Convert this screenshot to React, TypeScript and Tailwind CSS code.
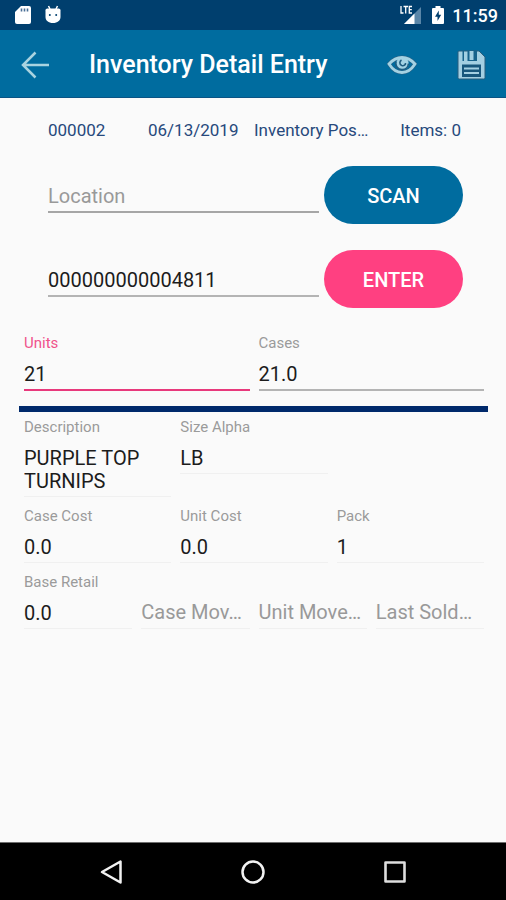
import { useId } from "react";
import clsx from "clsx";

interface FieldProps {
  label: string;
  value: string;
  active?: boolean;
  readOnly?: boolean;
}

function underline(active?: boolean, readOnly?: boolean) {
  if (active) return "border-b-2 border-[#e8397c]";
  if (readOnly) return "border-b border-[#f0f0f0]";
  return "border-b-2 border-[#b4b4b4]";
}

function Field({ label, value, active, readOnly }: FieldProps) {
  const id = useId();

  return (
    <div className="min-w-0">
      <label
        htmlFor={id}
        className={clsx("block text-[15px] leading-5", active ? "text-[#f0528c]" : "text-[#9b9b9b]")}
      >
        {label}
      </label>
      <input
        id={id}
        defaultValue={value}
        readOnly={readOnly}
        className={clsx(
          "block w-full bg-transparent pt-2.5 pb-[3px] text-xl leading-[23px] text-[#1c1c1c] outline-none",
          underline(active, readOnly)
        )}
      />
    </div>
  );
}

function TextAreaField({ label, value }: FieldProps) {
  const id = useId();

  return (
    <div className="min-w-0">
      <label htmlFor={id} className="block text-[15px] leading-5 text-[#9b9b9b]">
        {label}
      </label>
      <textarea
        id={id}
        rows={2}
        defaultValue={value}
        readOnly
        className="block w-full resize-none overflow-hidden border-b border-[#f0f0f0] bg-transparent pt-2.5 pb-[3px] text-xl leading-[23px] text-[#1c1c1c] outline-none"
      />
    </div>
  );
}

function EmptyField({ hint }: { hint: string }) {
  return (
    <input
      aria-label={hint}
      placeholder={hint}
      readOnly
      className="block w-full min-w-0 self-end border-b border-[#f0f0f0] bg-transparent pb-1 text-xl leading-[23px] outline-none placeholder:text-[#999999]"
    />
  );
}

function StatusBar() {
  return (
    <div className="flex h-[30px] items-center bg-[#003f6e] pr-2 pl-[15px]">
      <div className="flex flex-1 items-center gap-3.5">
        {/* SD card */}
        <svg width="16" height="20" viewBox="0 0 16 20">
          <path d="M6 1h8a2 2 0 0 1 2 2v14a2 2 0 0 1-2 2H2a2 2 0 0 1-2-2V7z" fill="#fff" />
          <path d="M6.500 3.500v3M9.500 3.500v3M12.500 3.500v3" stroke="#496f96" strokeWidth="1.600" />
        </svg>
        {/* Android debug bridge */}
        <svg width="16" height="20" viewBox="0 0 16 20">
          <path d="M3.500 1l1.500 3M12.500 1L11 4" stroke="#fff" strokeWidth="1.500" />
          <path d="M2.500 3.500h11A2 2 0 0 1 15.500 6v6c0 3.500-3 6-7.500 6S.500 15.500.500 12V6a2 2 0 0 1 2-2.500z" fill="#fff" />
          <circle cx="4.800" cy="10" r="1" fill="#003f6e" />
          <circle cx="11.200" cy="10" r="1" fill="#003f6e" />
        </svg>
      </div>
      <svg width="22" height="20" viewBox="0 0 22 20">
        <path d="M21 2v17H4z" fill="#5a86a8" />
        <path d="M14.500 8.500V19H4z" fill="#fff" />
        <path d="M1 1v7h2.500M3.500 1.500H8M5.700 1.500V8.500M12 1.500H9.300v6.500H12M9.300 4.700h2.500" fill="none" stroke="#fff" strokeWidth="1.300" />
      </svg>
      <svg className="ml-2.5" width="12" height="20" viewBox="0 0 12 20">
        <path d="M3.500 1h5v2H11a1 1 0 0 1 1 1v14a1 1 0 0 1-1 1H1a1 1 0 0 1-1-1V4a1 1 0 0 1 1-1h2.500z" fill="#fff" />
        <path d="M6.800 5.500L3 11.800h2.500V16L9.200 9.800H6.800z" fill="#003f6e" />
      </svg>
      <span className="ml-2 pt-0.5 text-lg leading-6 font-medium text-white">11:59</span>
    </div>
  );
}

function AppBar() {
  return (
    <header className="flex h-[68px] items-center border-b border-[#0a5485] bg-[#006c9f] pt-[3px] pr-5 pl-[21px]">
      <button aria-label="Back" className="mr-10">
        <svg width="28" height="28" viewBox="0 0 28 28" fill="none" stroke="#a9d3e0" strokeWidth="2.500">
          <path d="M14.500 1.500L2 14l12.500 12.500M2 14h26" />
        </svg>
      </button>
      <h1 className="flex-1 text-[25px] leading-8 font-medium whitespace-nowrap text-white">Inventory Detail Entry</h1>
      <button aria-label="View" className="mr-10">
        <svg width="30" height="20" viewBox="0 0 30 20" fill="none">
          <path
            d="M2 9C6 4.500 10 2.500 15 2.500S24 4.500 28 9c-3.500 5.500-8 8.500-13 8.500S5.500 14.500 2 9z"
            stroke="#2b5f80"
            strokeWidth="3.800"
          />
          <path
            d="M2 9C6 4.500 10 2.500 15 2.500S24 4.500 28 9c-3.500 5.500-8 8.500-13 8.500S5.500 14.500 2 9z"
            stroke="#a3d2e3"
            strokeWidth="2.800"
          />
          <circle cx="15.500" cy="8.500" r="6.200" fill="#a3d2e3" />
          <path
            d="M8.800 6.500c-.8 4 1.800 8 6.200 8 3.500 0 6.200-2.500 6.500-6"
            stroke="#1f5c80"
            strokeWidth="1.600"
          />
          <path
            d="M14.500 5c-2 1.200-2.500 4.500.3 5.600 2.200.7 3.900-.8 3.700-2.600"
            stroke="#1f5c80"
            strokeWidth="1.600"
          />
        </svg>
      </button>
      <button aria-label="Save">
        <svg width="29" height="30" viewBox="0 0 29 30">
          <path
            d="M2 1h20l6 6v20.500a1.500 1.500 0 0 1-1.500 1.500h-24A1.500 1.500 0 0 1 1 27.500V2a1 1 0 0 1 1-1z"
            fill="#a3cfe2"
            stroke="#285d7d"
          />
          <path d="M5.500 0H7v11H5.500zM10.500 0H20v11h-9.500z" fill="#17628b" />
          <path d="M12.500 1h4v9h-4z" fill="#a3cfe2" />
          <path d="M5 14.500h19V27H5z" fill="#17567c" />
          <path d="M7 18.500h15M7 23h15" stroke="#a3cfe2" strokeWidth="2" />
        </svg>
      </button>
    </header>
  );
}

function NavBar() {
  return (
    <nav className="flex h-[58px] items-center justify-between border-t border-[#6e6e6e] bg-black px-[100px]">
      <button aria-label="Back">
        <svg width="22" height="26" viewBox="0 0 22 26" fill="none" stroke="#f2f2f2" strokeWidth="2.500" strokeLinejoin="round">
          <path d="M20.500 2.500v21L2 13z" />
        </svg>
      </button>
      <button aria-label="Home">
        <svg width="26" height="26" viewBox="0 0 26 26" fill="none" stroke="#f2f2f2" strokeWidth="2.500">
          <circle cx="13" cy="13" r="10.500" />
        </svg>
      </button>
      <button aria-label="Recent apps">
        <svg width="22" height="22" viewBox="0 0 22 22" fill="none" stroke="#dedede" strokeWidth="2.600" strokeLinejoin="round">
          <path d="M1.500 1.500h19v19h-19z" />
        </svg>
      </button>
    </nav>
  );
}

export default function App() {
  return (
    <div className="flex min-h-screen flex-col bg-[#fafafa] font-['Roboto',sans-serif]">
      <StatusBar />
      <AppBar />

      <main className="flex-1">
        {/* Document summary */}
        <div className="flex pt-5 pr-[45px] pl-12 text-[17px] leading-6 whitespace-nowrap text-[#27497c]">
          <span className="w-[100px]">000002</span>
          <span className="w-[106px]">06/13/2019</span>
          <span className="flex-1">Inventory Pos…</span>
          <span>Items: 0</span>
        </div>

        {/* Location and item lookup */}
        <div className="flex flex-col gap-[26px] pt-6 pr-[43px] pl-12">
          <div className="flex items-center gap-[5px]">
            <input
              aria-label="Location"
              placeholder="Location"
              className="h-9 min-w-0 flex-1 border-b-2 border-[#a6a6a6] bg-transparent pt-[3px] text-xl text-[#1c1c1c] outline-none placeholder:text-[#999999]"
            />
            <button className="h-[58px] w-[139px] rounded-full bg-[#006c9f] pt-0.5 text-xl font-medium text-white">SCAN</button>
          </div>
          <div className="flex items-center gap-[5px]">
            <input
              aria-label="Item code"
              defaultValue="000000000004811"
              className="h-9 min-w-0 flex-1 border-b-2 border-[#b4b4b4] bg-transparent pt-[3px] text-xl text-[#1c1c1c] outline-none"
            />
            <button className="h-[58px] w-[139px] rounded-full bg-[#ff4081] pt-0.5 text-xl font-medium text-white">ENTER</button>
          </div>
        </div>

        {/* Quantities */}
        <div className="grid grid-cols-2 gap-[9px] pt-[25px] pr-[22px] pb-[15px] pl-6">
          <Field label="Units" value="21" active />
          <Field label="Cases" value="21.0" />
        </div>

        <hr className="mr-[18px] ml-[19px] border-t-6 border-[#00296b]" />

        {/* Item details */}
        <div className="flex flex-col gap-[9px] pt-[5px] pr-[22px] pl-6">
          <div className="grid grid-cols-3 gap-[9px]">
            <TextAreaField label="Description" value="PURPLE TOP TURNIPS" />
            <Field label="Size Alpha" value="LB" readOnly />
          </div>
          <div className="grid grid-cols-3 gap-[9px]">
            <Field label="Case Cost" value="0.0" readOnly />
            <Field label="Unit Cost" value="0.0" readOnly />
            <Field label="Pack" value="1" readOnly />
          </div>
          <div className="grid grid-cols-4 gap-[9px]">
            <Field label="Base Retail" value="0.0" readOnly />
            <EmptyField hint="Case Mov…" />
            <EmptyField hint="Unit Move…" />
            <EmptyField hint="Last Sold…" />
          </div>
        </div>
      </main>

      <NavBar />
    </div>
  );
}
